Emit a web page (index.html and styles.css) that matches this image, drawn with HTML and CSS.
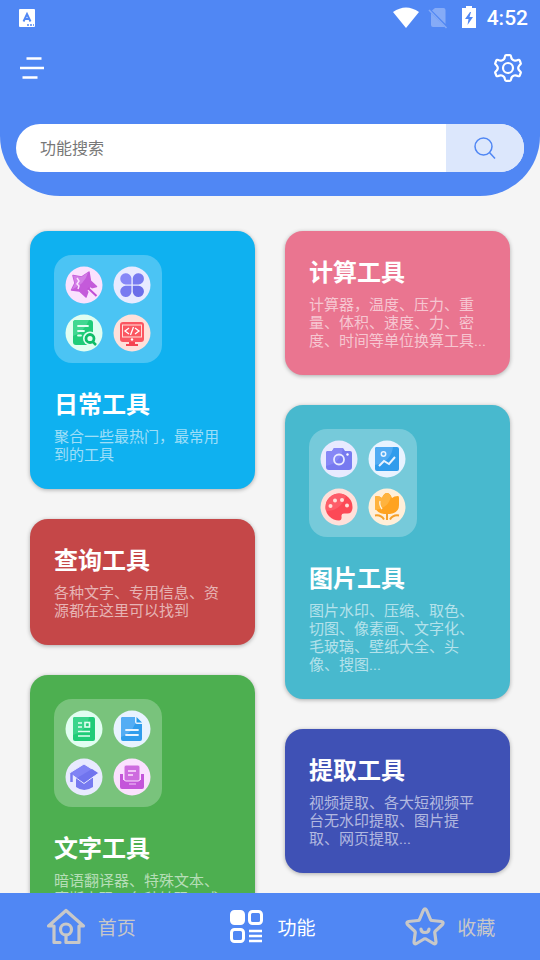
FILE: index.html
```html
<!DOCTYPE html>
<html lang="zh-CN">
<head>
  <meta charset="UTF-8">
  <meta name="viewport" content="width=device-width, initial-scale=1">
  <title>功能</title>
  <link rel="stylesheet" href="styles.css">
</head>
<body>
  <header class="header">
    <div class="status-bar">
      <svg class="status-app" width="16" height="18" viewBox="0 0 16 18">
        <rect width="16" height="18" rx="1" fill="#fff"/>
        <path d="M4.500 12.500L8 5l3.500 7.500M6 10h4" fill="none" stroke="#5087f4" stroke-width="2"/>
        <path d="M8 16h7" stroke="#5087f4" stroke-width="1.500" stroke-dasharray="2 1"/>
      </svg>
      <svg width="26" height="22" viewBox="0 0 26 22"><path d="M0 5Q13-4 26 5L13 21z" fill="#fff"/></svg>
      <svg class="status-sim" width="20" height="22" viewBox="0 0 20 22">
        <path d="M7 1h8.500q2 0 2 2v14L4 3.500zM3 6l14 14H5q-2 0-2-2z" fill="#85abf7"/>
        <path d="M1 3l17.500 18" stroke="#85abf7" stroke-width="1.500"/>
      </svg>
      <svg class="status-battery" width="14" height="24" viewBox="0 0 14 24">
        <path d="M4 0h6v2h4v20H0V2h4z" fill="#fff"/>
        <path d="M8 6L3 13h3.500L5.500 19 11 11H7.500L9 6z" fill="#5087f4"/>
      </svg>
      <span class="clock">4:52</span>
    </div>
    <div class="toolbar">
      <button class="icon-button" aria-label="菜单">
        <svg width="24" height="24" viewBox="0 0 24 24"><path d="M6.500 2.500h15M0 12h24M2.500 21.500h15" stroke="#fff" stroke-width="2.500"/></svg>
      </button>
      <button class="icon-button" aria-label="设置">
        <svg width="28" height="28" viewBox="0 0 28 28" fill="none" stroke="#fff" stroke-width="2.200" stroke-linejoin="round">
          <path d="M12 1.200h4q1 0 1.200 1.800 0 2.500 3 3.500 1.800.5 3.500-.5 1.500-.7 2 .5l1 2.500q.5 1-1 2-3 3 0 6 1.500 1 1 2l-1 2.500q-.5 1.200-2 .5-1.700-1-3.500-.5-3 1-3 3.500-.2 1.800-1.200 1.800h-4q-1 0-1.200-1.800 0-2.500-3-3.500-1.800-.5-3.500.5-1.500.7-2-.5L1.300 19q-.5-1 1-2 3-3 0-6-1.500-1-1-2l1-2.500q.5-1.200 2-.5 1.700 1 3.500.5 3-1 3-3.500.2-1.800 1.200-1.800z"/>
          <circle cx="14" cy="14" r="5"/>
        </svg>
      </button>
    </div>
    <form class="search">
      <input class="search-input" type="text" placeholder="功能搜索" aria-label="功能搜索">
      <button class="search-button" type="button" aria-label="搜索">
        <svg width="24" height="24" viewBox="0 0 24 24" fill="none" stroke="#5087f4" stroke-width="1.500"><circle cx="10.500" cy="10.500" r="8.500"/><path d="M16.500 16.500l5.500 6"/></svg>
      </button>
    </form>
  </header>

  <main class="content">
    <div class="column">
      <section class="card daily">
        <div class="icon-grid">
          <svg class="tool-icon" viewBox="0 0 38 38">
            <circle cx="19" cy="19" r="18.500" fill="#fbe1fe"/>
            <path d="M8 9.500l8.500 1.500L24 6l1.500 9 6 5.500-7.500 2L21 31l-6.500-6L6.500 24l3.500-7z" fill="#c45ada" stroke="#c45ada" stroke-width="1.500" stroke-linejoin="round"/>
            <path d="M8 9.500l8.500 1.500L23 6.500Q20 18 7 23.500l3-6.500z" fill="#d27de6"/>
            <path d="M12 12l2 3-2 3 2 2-1 3" fill="none" stroke="#fbe1fe" stroke-width="1.500"/>
            <path d="M24 23l8 7" stroke="#fbe1fe" stroke-width="4.500"/><path d="M23 22l8.500 8" stroke="#c04fd5" stroke-width="2"/>
          </svg>
          <svg class="tool-icon" viewBox="0 0 38 38">
            <circle cx="19" cy="19" r="18.500" fill="#e8eaff"/>
            <path d="M18.400 18.400V12a5.600 5.600 0 1 0-5.700 6.400z" fill="#8687f7"/>
            <path d="M19.800 18.400V12a5.600 5.600 0 1 1 5.700 6.400zM18.400 19.800V26a5.600 5.600 0 1 1-5.700-6.200z" fill="#777af0"/>
            <path d="M19.800 19.800V26a5.600 5.600 0 1 0 5.700-6.200z" fill="#6b6ee9"/>
          </svg>
          <svg class="tool-icon" viewBox="0 0 38 38">
            <circle cx="19" cy="19" r="18.500" fill="#e1fef1"/>
            <rect x="8" y="6" width="20" height="25" rx="3" fill="#20cc78"/>
            <path d="M8 22V9q0-3 3-3h13q-5 12-16 16z" fill="#40d891"/>
            <path d="M13 12h10M13 17h6M13 21.500h3" stroke="#e1fef1" stroke-width="1.800" stroke-linecap="round"/>
            <circle cx="25" cy="24.500" r="7" fill="#e1fef1"/><circle cx="25" cy="24.500" r="4" fill="none" stroke="#0fbd68" stroke-width="2.800"/>
            <path d="M28 28l3 3" stroke="#0fbd68" stroke-width="2.500"/>
          </svg>
          <svg class="tool-icon" viewBox="0 0 38 38">
            <circle cx="19" cy="19" r="18.500" fill="#ffe0da"/>
            <path d="M16 28h6v2h3v2H13v-2h3z" fill="#f44451"/>
            <rect x="7" y="8" width="24" height="20" rx="3" fill="#fb5661"/>
            <rect x="9.500" y="11" width="19" height="12" fill="none" stroke="#ffe0da"/>
            <path d="M16 14l-4 3 4 3M22 14l4 3-4 3M20.500 13l-3 8" fill="none" stroke="#fff" stroke-width="1.300"/><circle cx="19" cy="25.500" r="1.200" fill="#fff"/>
          </svg>
        </div>
        <h2 class="card-title">日常工具</h2>
        <p class="card-text">聚合一些最热门，最常用到的工具</p>
      </section>
      <section class="card query">
        <h2 class="card-title">查询工具</h2>
        <p class="card-text">各种文字、专用信息、资源都在这里可以找到</p>
      </section>
      <section class="card words">
        <div class="icon-grid">
          <svg class="tool-icon" viewBox="0 0 38 38">
            <circle cx="19" cy="19" r="18.500" fill="#e1fef1"/>
            <rect x="8" y="7" width="22" height="24" rx="2" fill="#20cc78"/><path d="M8 25V9q0-2 2-2h14q-2 14-16 18z" fill="#3ad58b"/>
            <path d="M13 13h4M13 17h4M13 21.500h12M13 26h12" stroke="#e1fef1" stroke-width="1.500"/>
            <rect x="20" y="12.500" width="4.500" height="4.500" fill="none" stroke="#e1fef1" stroke-width="1.600"/>
          </svg>
          <svg class="tool-icon" viewBox="0 0 38 38">
            <circle cx="19" cy="19" r="18.500" fill="#e8f3ff"/>
            <path d="M10 7h12v5q0 2 2 2h5v15q0 2-2 2H10q-2 0-2-2V9q0-2 2-2z" fill="#309cec"/>
            <path d="M8 27V9q0-2 2-2h12v7q-4 10-14 13z" fill="#54adf4"/>
            <path d="M23.500 7l5.500 5.500h-5.500z" fill="#259ae9"/><path d="M13 20h12M13 25h12" stroke="#e8f3ff" stroke-width="1.800" stroke-linecap="round"/>
          </svg>
          <svg class="tool-icon" viewBox="0 0 38 38">
            <circle cx="19" cy="19" r="18.500" fill="#e8eaff"/>
            <path d="M11 20v9q8 6 17 0v-9z" fill="#777af0"/>
            <path d="M4.500 15L19 6l14.500 9L19 25.500z" fill="#8083f5" stroke="#e8eaff"/><path d="M33 15l-14 9.500-7-4.500 15-9z" fill="#7074ee"/>
            <path d="M6.500 15v9" stroke="#777af0" stroke-width="2.500"/>
          </svg>
          <svg class="tool-icon" viewBox="0 0 38 38">
            <circle cx="19" cy="19" r="18.500" fill="#fbe1fe"/>
            <path d="M7 16h3v6h18v-6h3v13q0 2-2 2H9q-2 0-2-2z" fill="#c455da"/>
            <rect x="11" y="7" width="16" height="16" rx="2" fill="#ce6cdf" stroke="#fbe1fe"/>
            <path d="M15 13h8M15 17h5" stroke="#fbe1fe" stroke-width="1.500"/><path d="M16 26h7" stroke="#f3c9fa"/>
          </svg>
        </div>
        <h2 class="card-title">文字工具</h2>
        <p class="card-text">暗语翻译器、特殊文本、摩斯电码、各种转码、成语大全</p>
      </section>
    </div>

    <div class="column">
      <section class="card compute">
        <h2 class="card-title">计算工具</h2>
        <p class="card-text">计算器，温度、压力、重量、体积、速度、力、密度、时间等单位换算工具...</p>
      </section>
      <section class="card picture">
        <div class="icon-grid">
          <svg class="tool-icon" viewBox="0 0 38 38">
            <circle cx="19" cy="19" r="18.500" fill="#e8eaff"/>
            <path d="M8 11h4l2-3h9l2 3h5q2 0 2 2v14q0 3-3 3H9q-3 0-3-3V13q0-2 2-2z" fill="#777af0"/>
            <path d="M6 26V13q0-2 2-2h4l2-3h9q-2 15-17 18z" fill="#8687f6"/>
            <circle cx="19" cy="19.500" r="5" fill="none" stroke="#e8eaff" stroke-width="1.800"/><circle cx="27.500" cy="14.500" r="1.200" fill="#fff"/>
          </svg>
          <svg class="tool-icon" viewBox="0 0 38 38">
            <circle cx="19" cy="19" r="18.500" fill="#e8f3ff"/>
            <rect x="7" y="7" width="24" height="24" rx="2" fill="#309cec"/><path d="M7 25V9q0-2 2-2h16q-2 15-18 18z" fill="#50abf3"/>
            <circle cx="15.500" cy="14" r="2.200" fill="none" stroke="#e8f3ff" stroke-width="1.500"/><path d="M11 26l5-5 5 3 6-7" fill="none" stroke="#e8f3ff" stroke-width="2"/>
          </svg>
          <svg class="tool-icon" viewBox="0 0 38 38">
            <circle cx="19" cy="19" r="18.500" fill="#ffe0da"/>
            <path d="M19 5.500A13.500 13.500 0 0 1 32.500 19q0 6.500-5 6.500H24q-3 0-2.500 3 .5 4-2.500 4a13.500 13.500 0 0 1 0-27z" fill="#fc4956"/>
            <path d="M6 23Q4 13 12 7.500q8-4 14 .5-5 15-20 15z" fill="#fe5d69"/>
            <g fill="#ffe0da"><circle cx="10.500" cy="18" r="2"/><circle cx="15" cy="12.500" r="2"/><circle cx="22" cy="12" r="2"/><circle cx="27" cy="17.500" r="2"/></g>
          </svg>
          <svg class="tool-icon" viewBox="0 0 38 38">
            <circle cx="19" cy="19" r="18.500" fill="#ffefd9"/>
            <path d="M8 8q4 0 6 2 2-5 5-5t5 5q2-2 6-2 1 0 1 2v7q0 8-9 9h-6q-9-1-9-9v-7q0-2 1-2z" fill="#ffa31f"/>
            <path d="M8 8q4 0 6 2 2-5 5-5 2 0 4 3-2 12-16 14V10q0-2 1-2z" fill="#ffb33e"/>
            <path d="M12 13q-1 4 2 8" fill="none" stroke="#fff3dd" stroke-width="1.300"/>
            <path d="M19 25v7M7 27.500q6-1 9 4M31 27.500q-6-1-9 4" fill="none" stroke="#f6a028" stroke-width="2"/>
          </svg>
        </div>
        <h2 class="card-title">图片工具</h2>
        <p class="card-text">图片水印、压缩、取色、切图、像素画、文字化、毛玻璃、壁纸大全、头像、搜图...</p>
      </section>
      <section class="card extract">
        <h2 class="card-title">提取工具</h2>
        <p class="card-text">视频提取、各大短视频平台无水印提取、图片提取、网页提取...</p>
      </section>
    </div>
  </main>

  <nav class="tab-bar">
    <a class="tab" href="#home">
      <svg width="40" height="40" viewBox="0 0 40 40" fill="none" stroke="#c8c8c8" stroke-width="3.200" stroke-linecap="round" stroke-linejoin="round">
        <path d="M14 36.500H8V20H2.500L20 4.500 37.500 20H33v16.500H20V29"/><circle cx="20" cy="23.500" r="5.500"/>
      </svg>
      <span>首页</span>
    </a>
    <a class="tab active" href="#tools">
      <svg width="40" height="40" viewBox="0 0 40 40" fill="none" stroke="#fff" stroke-width="3">
        <rect x="5.500" y="5.500" width="12" height="12" rx="3" fill="#fff"/><rect x="23.500" y="5.500" width="12" height="12" rx="3"/><rect x="5.500" y="23.500" width="12" height="12" rx="3"/>
        <path d="M23 25h13M23 30h13M23 35h13" stroke-width="2.500"/>
      </svg>
      <span>功能</span>
    </a>
    <a class="tab" href="#favorites">
      <svg width="40" height="40" viewBox="0 0 40 40" fill="none" stroke="#c8c8c8" stroke-width="3.200" stroke-linecap="round" stroke-linejoin="round">
        <path d="M18.500 4q1.500-2.500 3 0l4 9.500q.5 1 1.500 1l9.500 1q2.500.5 1 3l-7 6.500q-1 1-.7 2l1.200 9q0 2.500-2.500 1.500l-7.500-4.500q-1-.5-2 0l-7.500 4.500Q9 38.500 9 36l1.200-9q.3-1-.7-2l-7-6.500q-1.500-2.500 1-3l9.500-1q1 0 1.500-1z"/>
        <path d="M16 23q0 3.500 4 3.500t4-3.500"/>
      </svg>
      <span>收藏</span>
    </a>
  </nav>
</body>
</html>
```
FILE: styles.css
```css
* {
  box-sizing: border-box;
}
body {
  display: flex;
  flex-direction: column;
  height: 100vh;
  margin: 0;
  overflow: hidden;
  background: #f5f5f5;
  font-family: Roboto, "Noto Sans CJK SC", sans-serif;
}
button {
  padding: 0;
  border: none;
  background: none;
  cursor: pointer;
}
svg {
  display: block;
  flex: none;
}
.header {
  flex: none;
  padding-bottom: 24px;
  background: #5087f4;
  border-radius: 0 0 60px 60px;
}
.status-bar {
  display: flex;
  align-items: center;
  height: 36px;
  padding: 0 12px 0 19px;
  color: #fff;
}
.status-app {
  margin-right: auto;
}
.status-sim {
  margin-left: 9px;
}
.status-battery {
  margin: 0 11px 0 14px;
}
.clock {
  font-size: 21px;
  font-weight: 500;
}
.toolbar {
  display: flex;
  justify-content: space-between;
  align-items: center;
  height: 64px;
  padding: 0 18px 0 20px;
}
.search {
  display: flex;
  height: 48px;
  margin: 24px 16px 0;
  border-radius: 24px;
  background: #fff;
  overflow: hidden;
}
.search-input {
  flex: 1;
  min-width: 0;
  padding: 0 24px;
  border: none;
  outline: none;
  background: none;
  font-family: inherit;
  font-size: 16px;
}
.search-input::placeholder {
  color: #777;
}
.search-button {
  display: flex;
  align-items: center;
  justify-content: center;
  width: 78px;
  background: #dce7fc;
}
.content {
  display: grid;
  grid-template-columns: 1fr 1fr;
  gap: 30px;
  flex: 1;
  min-height: 0;
  padding: 35px 30px 0;
  overflow: hidden;
}
.column {
  display: flex;
  flex-direction: column;
  gap: 30px;
}
.card {
  flex: none;
  padding: 24px 24px 25px;
  border-radius: 18px;
  color: #fff;
  box-shadow: 0 1px 4px rgba(0, 0, 0, 0.3);
}
.daily {
  background: #0fb1f0;
}
.query {
  background: #c54748;
}
.words {
  background: #4daf50;
}
.compute {
  background: #ea7590;
}
.picture {
  background: #48b9ce;
}
.extract {
  background: #3f51b5;
}
.icon-grid {
  display: grid;
  grid-template-columns: 38px 38px;
  gap: 10px;
  width: 108px;
  height: 108px;
  margin-bottom: 24px;
  padding: 11px;
  border-radius: 18px;
  background: rgba(255, 255, 255, 0.25);
}
.tool-icon {
  width: 38px;
  height: 38px;
}
.card-title {
  margin: 0 0 5px;
  font-size: 24px;
  font-weight: 700;
  line-height: 36px;
}
.card-text {
  margin: 0;
  color: rgba(255, 255, 255, 0.6);
  font-size: 15px;
  line-height: 18px;
}
.tab-bar {
  display: flex;
  flex: none;
  height: 67px;
  padding: 0 0 1px 1px;
  background: #5087f4;
}
.tab {
  display: flex;
  flex: 1;
  align-items: center;
  justify-content: center;
  gap: 12px;
  color: #c8c8c8;
  font-size: 19px;
  text-decoration: none;
}
.tab.active {
  color: #fff;
}
```
